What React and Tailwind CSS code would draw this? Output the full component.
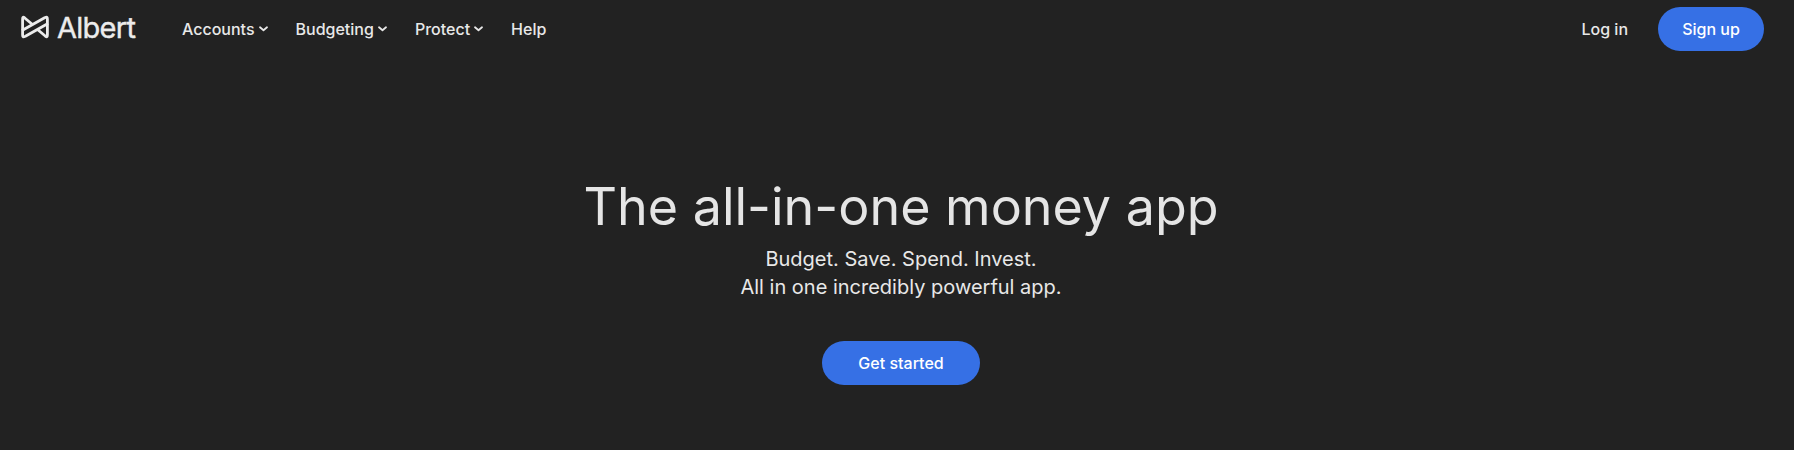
const links = [
    { label: 'Accounts', menu: true },
    { label: 'Budgeting', menu: true },
    { label: 'Protect', menu: true },
    { label: 'Help', menu: false },
];

function Logo() {
    return (
        <a href="#" className="-mt-1 flex w-[117px] items-center text-[#ececec]">
            <svg className="shrink-0" width="30" height="24" viewBox="0 0 30 24" fill="none" stroke="currentColor" strokeWidth="2.8" strokeLinejoin="round">
                <path d="M12.5 9.5L5 3.2C3 1.7 2.6 2 2.6 4v16c0 2 .4 2.3 2.8 1.2L28 8.5" />
                <path d="M17.5 14.5l7.5 6.3c2 1.5 2.4 1.2 2.4-.8V4c0-2-.4-2.3-2.8-1.2L2 15.5" />
            </svg>
            <span className="ml-[7px] text-[29px] font-normal leading-none tracking-[-0.025em] [-webkit-text-stroke:0.4px_currentColor]">
                Albert
            </span>
        </a>
    );
}

function Chevron() {
    return (
        <svg width="9" height="6" viewBox="0 0 9 6" fill="none" stroke="currentColor" strokeWidth="1.8" strokeLinecap="round" strokeLinejoin="round">
            <path d="M1 1.3l3.5 3L8 1.3" />
        </svg>
    );
}

function Header() {
    return (
        <header className="flex h-[58px] items-center pl-5 pr-[30px] text-base font-medium">
            <Logo />
            <nav className="ml-[45px] flex items-center gap-7">
                {links.map((link) => (
                    <a key={link.label} href="#" className="flex items-center gap-1">
                        {link.label}
                        {link.menu && <Chevron />}
                    </a>
                ))}
            </nav>
            <div className="ml-auto flex items-center gap-[30px]">
                <a href="#">Log in</a>
                <a href="#" className="flex h-11 w-[106px] items-center justify-center rounded-full bg-[#3670e5] text-white">
                    Sign up
                </a>
            </div>
        </header>
    );
}

export default function App() {
    return (
        <div className="h-[450px] overflow-hidden bg-[#222222] font-[Inter,sans-serif] text-[#e8e8e8]">
            <Header />
            <main className="flex flex-col items-center pt-[116px] pl-2 text-center">
                <h1 className="text-[52px] leading-[66px] text-[#e5e5e5]">The all-in-one money app</h1>
                <p className="mt-[5px] text-xl leading-7">
                    Budget. Save. Spend. Invest.
                    <br />
                    All in one incredibly powerful app.
                </p>
                <a href="#" className="mt-10 flex h-11 w-[158px] items-center justify-center rounded-full bg-[#3670e5] text-base font-medium text-white">
                    Get started
                </a>
            </main>
        </div>
    );
}
